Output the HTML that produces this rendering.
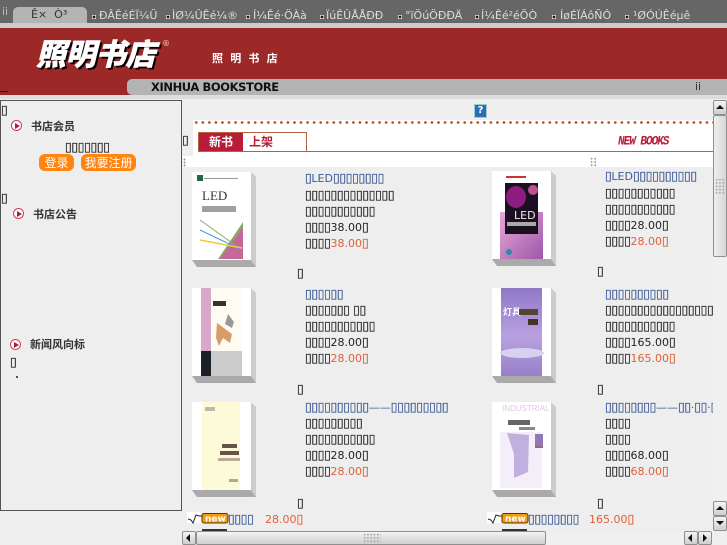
<!DOCTYPE html>
<html lang="zh"><head><meta charset="utf-8"><title>照明书店</title>
<style>
html,body{margin:0;padding:0;width:727px;height:545px;overflow:hidden;background:#eee}
body{position:relative;font:11px/14px "DejaVu Sans",sans-serif;color:#222}
div{position:absolute}
u{text-decoration:none;font-size:12.5px;letter-spacing:-.5px;color:inherit;-webkit-text-stroke:.2px currentColor}
.l{white-space:nowrap;height:14px;line-height:14px}
.lk{color:#3b5a94}.pr{color:#e0603a}
.nav{top:9px;color:#ddd;white-space:nowrap;line-height:14px}
.b{width:4px;height:4px;top:15px;background:radial-gradient(circle,#301018 45%,#ddd 50%)}
.h{font:bold 11px/14px "Noto Sans CJK SC",sans-serif;color:#333;white-space:nowrap}
.c{width:9px;height:9px;border:1.5px solid #c8405a;border-radius:50%;background:#fff}
.c:after{content:"";position:absolute;left:3px;top:1.5px;border-left:5px solid #a82040;border-top:3px solid transparent;border-bottom:3px solid transparent}
.btn{height:17px;border-radius:6px;background:#ff8410;color:#fff;text-align:center;font:12px/17px "Noto Sans CJK SC",sans-serif}
.cov{width:59px;height:88px;background:#fff;overflow:hidden}
.s1{width:5px;height:95px;background:#ccc;clip-path:polygon(0 0,100% 5px,100% 100%,0 88px)}
.s2{width:64px;height:7px;background:#aaa;clip-path:polygon(0 0,59px 0,100% 100%,5px 100%)}
.sb{background:linear-gradient(#f4f4f4,#cfcfcf);border:1px solid #8f8f8f;border-radius:2px;box-sizing:border-box}
</style></head><body>
<div style="left:0;top:0;width:727px;height:23px;background:#666"></div>
<div style="left:13px;top:7px;width:74px;height:16px;background:#b4b4b4;border-radius:5px 5px 0 0"></div>
<div style="left:2px;top:5px;color:#bbb;line-height:14px">ii</div>
<div class="nav" style="left:31px;top:8px;color:#333">Ê× &nbsp;Ò³</div>
<div class="b" style="left:92px"></div><div class="nav" style="left:99px">ÐÂÊéÉÏ¼Ü</div>
<div class="b" style="left:166px"></div><div class="nav" style="left:172px">ÌØ¼ÛÊé¼®</div>
<div class="b" style="left:246px"></div><div class="nav" style="left:253px">Í¼Êé·ÖÀà</div>
<div class="b" style="left:320px"></div><div class="nav" style="left:326px">ÏúÊÛÅÅÐÐ</div>
<div class="b" style="left:398px"></div><div class="nav" style="left:405px">°ïÖúÖÐÐÄ</div>
<div class="b" style="left:475px"></div><div class="nav" style="left:481px">Í¼Êé²éÕÒ</div>
<div class="b" style="left:552px"></div><div class="nav" style="left:560px">ÍøÉÏÁôÑÔ</div>
<div class="b" style="left:625px"></div><div class="nav" style="left:633px">¹ØÓÚÊéµê</div>
<div style="left:0;top:23px;width:727px;height:5px;background:#ccc"></div>
<div style="left:0;top:28px;width:727px;height:67px;background:#9c2828"></div>
<div style="left:36px;top:30px;font:italic 900 30px/44px 'Noto Sans CJK SC',sans-serif;color:#fff;text-shadow:2px 2px 0 #000;white-space:nowrap;letter-spacing:-.2px;-webkit-text-stroke:.5px #fff">照明书店</div>
<div style="left:162px;top:40px;font:8px/8px 'DejaVu Sans',sans-serif;color:#ddb">®</div>
<div style="left:212px;top:50px;font:bold 11px/16px 'Noto Sans CJK SC',sans-serif;color:#fff;letter-spacing:7.2px;white-space:nowrap">照明书店</div>
<div style="left:127px;top:79px;width:600px;height:16px;background:#b4b4b4;border-radius:5px 0 0 5px"></div>
<div style="left:151px;top:80px;font:bold 11.5px/14px 'DejaVu Sans',sans-serif;color:#111;white-space:nowrap;letter-spacing:-.4px">XINHUA BOOKSTORE</div>
<div style="left:695px;top:80px;color:#333">ii</div>
<div style="left:0;top:91px;width:8px;height:1px;background:#111"></div>
<div style="left:0;top:95px;width:727px;height:4px;background:#ddd"></div>

<!-- left panel -->
<div style="left:0;top:100px;width:180px;height:409px;border:1px solid #555;background:#eee"></div>
<div class="l" style="left:1px;top:103px"><u>▯</u></div>
<div class="c" style="left:11px;top:120px"></div><div class="h" style="left:31px;top:119px">书店会员</div>
<div class="l" style="left:65px;top:140px"><u>▯▯▯▯▯▯▯</u></div>
<div class="btn" style="left:39px;top:154px;width:35px">登录</div>
<div class="btn" style="left:81px;top:154px;width:55px">我要注册</div>
<div class="l" style="left:1px;top:191px"><u>▯</u></div>
<div class="c" style="left:13px;top:208px"></div><div class="h" style="left:33px;top:207px">书店公告</div>
<div class="c" style="left:10px;top:339px"></div><div class="h" style="left:30px;top:337px">新闻风向标</div>
<div class="l" style="left:10px;top:355px"><u>▯</u></div>
<div style="left:16px;top:376px;width:2px;height:2px;background:#555"></div>

<!-- main -->
<div style="left:183px;top:100px;width:530px;height:431px;overflow:hidden">
<div style="left:291px;top:4px;width:13px;height:14px;background:#2a6cb8;border:1px solid #9cc;color:#fff;font:bold 10px/12px 'DejaVu Sans';text-align:center;box-sizing:border-box">?</div>
<div style="left:10px;top:20px;width:520px;height:36px;background:#fff"></div>
<div style="left:0;top:56px;width:530px;height:11px;background:#fff"></div>
<div style="left:10px;top:21px;width:520px;height:3px;background-image:radial-gradient(circle,#b5532a 1.2px,transparent 1.5px);background-size:6.55px 3px"></div>
<div style="left:15px;top:32px;width:107px;height:18px;border:1px solid #b5633a;background:#fff"></div>
<div style="left:16px;top:33px;width:44px;height:18px;background:#b81c38;color:#fff;font:bold 12px/18px 'Noto Sans CJK SC',sans-serif;text-align:center">新书</div>
<div style="left:66px;top:33px;color:#b81c38;font:bold 12px/18px 'Noto Sans CJK SC',sans-serif">上架</div>
<div style="left:124px;top:51px;width:406px;height:1px;background:#b5633a"></div>
<div style="left:435px;top:35px;color:#b81c38;font:italic bold 11px/14px 'Liberation Mono',monospace;white-space:nowrap;letter-spacing:-1px;transform:scaleY(1.15)">NEW BOOKS</div>
<div class="l" style="left:-1px;top:33px"><u>▯</u></div>
<div style="left:0;top:58px;width:3px;height:9px;background-image:radial-gradient(circle,#999 1px,transparent 1px);background-size:3px 3px"></div>
<div style="left:407px;top:57px;width:7px;height:10px;background-image:radial-gradient(circle,#999 1px,transparent 1px);background-size:3.5px 3.3px"></div>

<!-- book 1 -->
<div class="cov" style="left:9px;top:72px"><svg width="59" height="88"><rect x="5" y="3" width="6" height="6" fill="#264"/><rect x="12" y="6" width="34" height="1" fill="#999"/><text x="10" y="28" font-family="Liberation Serif" font-size="13" fill="#333">LED</text><rect x="10" y="34" width="34" height="6" fill="#777" opacity=".7"/><polygon points="9,87 26,87 51,50 51,84 42,87" fill="#8a6"/><polygon points="28,87 51,55 51,87" fill="#c4689a"/><line x1="8" y1="48" x2="50" y2="78" stroke="#8a6" stroke-width="1"/><line x1="8" y1="58" x2="50" y2="78" stroke="#4a9ad8" stroke-width="1"/><line x1="8" y1="68" x2="50" y2="76" stroke="#ec3" stroke-width="1.5"/></svg></div>
<div class="s1" style="left:68px;top:72px"></div><div class="s2" style="left:9px;top:160px"></div>
<!-- book 2 -->
<div class="cov" style="left:309px;top:71px"><svg width="59" height="88"><defs><linearGradient id="g1" x1="0" x2="1" y1="0" y2="1"><stop offset="0" stop-color="#e8a8d8"/><stop offset="1" stop-color="#9c58a8"/></linearGradient></defs><rect x="8" y="41" width="43" height="47" fill="url(#g1)"/><rect x="13" y="12" width="33" height="51" fill="#1a1020"/><ellipse cx="24" cy="26" rx="10" ry="11" fill="#8c1c80"/><ellipse cx="41" cy="19" rx="5" ry="5" fill="#c05090"/><text x="22" y="48" font-size="11" font-family="DejaVu Sans" fill="#eee">LED</text><rect x="15" y="51" width="29" height="4" fill="#aaa"/><rect x="14" y="5" width="20" height="2" fill="#c33"/><circle cx="17" cy="81" r="3" fill="#38a"/></svg></div>
<div class="s1" style="left:368px;top:71px"></div><div class="s2" style="left:309px;top:159px"></div>
<!-- book 3 -->
<div class="cov" style="left:9px;top:188px"><svg width="59" height="88"><rect x="9" y="0" width="10" height="63" fill="#d8a8c8"/><rect x="9" y="63" width="10" height="25" fill="#1a2028"/><rect x="19" y="63" width="31" height="25" fill="#ccc"/><rect x="19" y="0" width="31" height="63" fill="#fdfbf2"/><polygon points="25,35 40,46 38,55 31,50 27,58 24,50" fill="#d89c68"/><polygon points="36,26 42,34 40,40 33,36" fill="#999"/><rect x="21" y="13" width="13" height="5" fill="#333"/></svg></div>
<div class="s1" style="left:68px;top:188px"></div><div class="s2" style="left:9px;top:276px"></div>
<!-- book 4 -->
<div class="cov" style="left:309px;top:188px"><svg width="59" height="88"><defs><linearGradient id="g2" x1="0" x2="0" y1="0" y2="1"><stop offset="0" stop-color="#9078c8"/><stop offset=".55" stop-color="#b8a0e0"/><stop offset="1" stop-color="#9880c8"/></linearGradient></defs><rect x="9" y="0" width="41" height="88" fill="url(#g2)"/><text x="11" y="27" font-size="9" font-weight="bold" font-family="Noto Sans CJK SC" fill="#fff">灯具</text><rect x="27" y="21" width="19" height="6" fill="#543"/><rect x="36" y="31" width="10" height="6" fill="#432"/><ellipse cx="30" cy="65" rx="22" ry="5" fill="#d8d0f0"/></svg></div>
<div class="s1" style="left:368px;top:188px"></div><div class="s2" style="left:309px;top:276px"></div>
<!-- book 5 -->
<div class="cov" style="left:9px;top:302px"><svg width="59" height="88"><rect x="10" y="0" width="38" height="88" fill="#fdfad8"/><rect x="13" y="5" width="10" height="4" fill="#bba"/><rect x="30" y="42" width="15" height="4" fill="#654"/><rect x="28" y="49" width="19" height="4" fill="#654"/><rect x="26" y="56" width="22" height="3" fill="#ba9"/><rect x="37" y="77" width="9" height="3" fill="#aa9"/></svg></div>
<div class="s1" style="left:68px;top:302px"></div><div class="s2" style="left:9px;top:390px"></div>
<!-- book 6 -->
<div class="cov" style="left:309px;top:302px"><svg width="59" height="88"><text x="10" y="9" font-size="8" font-family="Liberation Sans" fill="#e0c8e8">INDUSTRIAL</text><rect x="16" y="18" width="22" height="5" fill="#666"/><rect x="27" y="25" width="16" height="3" fill="#888"/><rect x="8" y="30" width="42" height="56" fill="#f4eef8"/><polygon points="15,31 37,33 36,70 22,76 22,52" fill="#c0b0e0"/><rect x="43" y="32" width="8" height="12" fill="#9078b8"/><rect x="43" y="44" width="8" height="2" fill="#968"/></svg></div>
<div class="s1" style="left:368px;top:302px"></div><div class="s2" style="left:309px;top:390px"></div>

<!-- col 1 row 1 -->
<div class="l lk" style="left:122px;top:71px"><u>▯</u>LED<u>▯▯▯▯▯▯▯▯</u></div>
<div class="l" style="left:122px;top:88px"><u>▯▯▯▯▯▯▯▯▯▯▯▯▯▯</u></div>
<div class="l" style="left:122px;top:104px"><u>▯▯▯▯▯▯▯▯▯▯▯</u></div>
<div class="l" style="left:122px;top:120px"><u>▯▯▯▯</u>38.00<u>▯</u></div>
<div class="l" style="left:122px;top:136px"><u>▯▯▯▯</u><span class="pr">38.00<u>▯</u></span></div>
<div class="l" style="left:114px;top:166px"><u>▯</u></div>
<!-- col 2 row 1 -->
<div class="l lk" style="left:422px;top:69px"><u>▯</u>LED<u>▯▯▯▯▯▯▯▯▯▯</u></div>
<div class="l" style="left:422px;top:86px"><u>▯▯▯▯▯▯▯▯▯▯▯</u></div>
<div class="l" style="left:422px;top:102px"><u>▯▯▯▯▯▯▯▯▯▯▯</u></div>
<div class="l" style="left:422px;top:118px"><u>▯▯▯▯</u>28.00<u>▯</u></div>
<div class="l" style="left:422px;top:134px"><u>▯▯▯▯</u><span class="pr">28.00<u>▯</u></span></div>
<div class="l" style="left:414px;top:164px"><u>▯</u></div>
<!-- col 1 row 2 -->
<div class="l lk" style="left:122px;top:187px"><u>▯▯▯▯▯▯</u></div>
<div class="l" style="left:122px;top:203px"><u>▯▯▯▯▯▯▯</u> <u>▯▯</u></div>
<div class="l" style="left:122px;top:219px"><u>▯▯▯▯▯▯▯▯▯▯▯</u></div>
<div class="l" style="left:122px;top:235px"><u>▯▯▯▯</u>28.00<u>▯</u></div>
<div class="l" style="left:122px;top:251px"><u>▯▯▯▯</u><span class="pr">28.00<u>▯</u></span></div>
<div class="l" style="left:114px;top:282px"><u>▯</u></div>
<!-- col 2 row 2 -->
<div class="l lk" style="left:422px;top:187px"><u>▯▯▯▯▯▯▯▯▯▯</u></div>
<div class="l" style="left:422px;top:203px"><u>▯▯▯▯▯▯▯▯▯▯▯▯▯▯▯▯▯▯</u></div>
<div class="l" style="left:422px;top:219px"><u>▯▯▯▯▯▯▯▯▯▯▯</u></div>
<div class="l" style="left:422px;top:235px"><u>▯▯▯▯</u>165.00<u>▯</u></div>
<div class="l" style="left:422px;top:251px"><u>▯▯▯▯</u><span class="pr">165.00<u>▯</u></span></div>
<div class="l" style="left:414px;top:282px"><u>▯</u></div>
<!-- col 1 row 3 -->
<div class="l lk" style="left:122px;top:300px"><u>▯▯▯▯▯▯▯▯▯▯</u>——<u>▯▯▯▯▯▯▯▯▯</u></div>
<div class="l" style="left:122px;top:316px"><u>▯▯▯▯▯▯▯▯▯</u></div>
<div class="l" style="left:122px;top:332px"><u>▯▯▯▯▯▯▯▯▯▯▯</u></div>
<div class="l" style="left:122px;top:348px"><u>▯▯▯▯</u>28.00<u>▯</u></div>
<div class="l" style="left:122px;top:364px"><u>▯▯▯▯</u><span class="pr">28.00<u>▯</u></span></div>
<div class="l" style="left:114px;top:396px"><u>▯</u></div>
<!-- col 2 row 3 -->
<div class="l lk" style="left:422px;top:300px"><u>▯▯▯▯▯▯▯▯</u>——<u>▯▯</u>·<u>▯▯</u>·<u>▯▯</u></div>
<div class="l" style="left:422px;top:316px"><u>▯▯▯▯</u></div>
<div class="l" style="left:422px;top:332px"><u>▯▯▯▯</u></div>
<div class="l" style="left:422px;top:348px"><u>▯▯▯▯</u>68.00<u>▯</u></div>
<div class="l" style="left:422px;top:364px"><u>▯▯▯▯</u><span class="pr">68.00<u>▯</u></span></div>
<div class="l" style="left:414px;top:396px"><u>▯</u></div>
<!-- new list -->
<div style="left:4px;top:412px;width:14px;height:11px;background:#fff"></div>
<div style="left:304px;top:412px;width:14px;height:11px;background:#fff"></div>
<svg style="position:absolute;left:4px;top:412px" width="42" height="12"><path d="M1 7l3 1 2 3 3-8 3 1 3 0" stroke="#222" fill="none"/><rect x="15" y="1.5" width="26" height="9.5" rx="2" fill="#f39c12" stroke="#5a3a00"/><text x="18" y="9.5" font-size="9" font-weight="bold" font-family="DejaVu Sans" fill="#fff">new</text></svg>
<svg style="position:absolute;left:304px;top:412px" width="42" height="12"><path d="M1 7l3 1 2 3 3-8 3 1 3 0" stroke="#222" fill="none"/><rect x="15" y="1.5" width="26" height="9.5" rx="2" fill="#f39c12" stroke="#5a3a00"/><text x="18" y="9.5" font-size="9" font-weight="bold" font-family="DejaVu Sans" fill="#fff">new</text></svg>
<div style="left:19px;top:429px;width:25px;height:2px;background:#333"></div>
<div style="left:319px;top:429px;width:25px;height:2px;background:#333"></div>
<div class="l lk" style="left:45px;top:412px"><u>▯▯▯▯</u></div>
<div class="l pr" style="left:82px;top:412px">28.00<u>▯</u></div>
<div class="l lk" style="left:345px;top:412px"><u>▯▯▯▯▯▯▯▯</u></div>
<div class="l pr" style="left:406px;top:412px">165.00<u>▯</u></div>
</div>

<!-- vertical scrollbar -->
<div style="left:713px;top:100px;width:14px;height:431px;background:#f0f0f0"></div>
<div class="sb" style="left:713px;top:100px;width:14px;height:15px"></div>
<div style="left:716px;top:105px;border:4px solid transparent;border-top:0;border-bottom:4px solid #111"></div>
<div class="sb" style="left:713px;top:115px;width:14px;height:142px;background:linear-gradient(90deg,#eee,#d8d8d8)"></div>
<div style="left:715px;top:178px;width:10px;height:17px;background-image:radial-gradient(circle,#aaa 1px,transparent 1px);background-size:3.3px 3.3px"></div>
<div class="sb" style="left:713px;top:501px;width:14px;height:15px"></div>
<div style="left:716px;top:506px;border:4px solid transparent;border-top:0;border-bottom:4px solid #111"></div>
<div class="sb" style="left:713px;top:516px;width:14px;height:15px"></div>
<div style="left:716px;top:521px;border:4px solid transparent;border-bottom:0;border-top:4px solid #111"></div>
<!-- horizontal scrollbar -->
<div style="left:182px;top:531px;width:545px;height:14px;background:#f0f0f0"></div>
<div class="sb" style="left:182px;top:531px;width:14px;height:14px"></div>
<div style="left:186px;top:534px;border:4px solid transparent;border-left:0;border-right:4px solid #111"></div>
<div class="sb" style="left:196px;top:531px;width:350px;height:14px"></div>
<div style="left:363px;top:533px;width:18px;height:10px;background-image:radial-gradient(circle,#aaa 1px,transparent 1px);background-size:3.3px 3.3px"></div>
<div class="sb" style="left:684px;top:531px;width:14px;height:14px"></div>
<div style="left:688px;top:534px;border:4px solid transparent;border-left:0;border-right:4px solid #111"></div>
<div class="sb" style="left:698px;top:531px;width:14px;height:14px"></div>
<div style="left:703px;top:534px;border:4px solid transparent;border-right:0;border-left:4px solid #111"></div>
<div style="left:712px;top:531px;width:15px;height:14px;background:#eee"></div>
</body></html>
